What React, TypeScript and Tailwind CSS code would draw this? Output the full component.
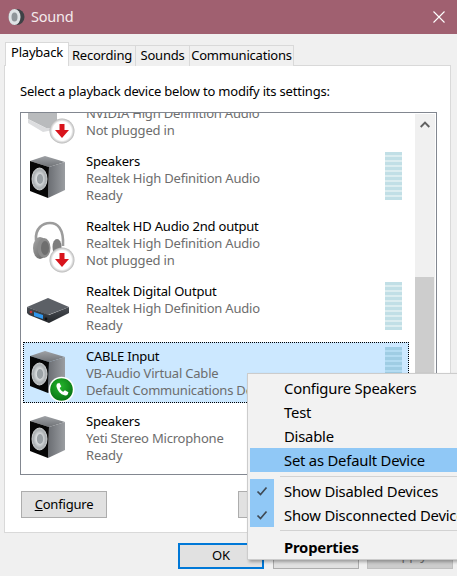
import React from "react";

const Defs = () => (
  <svg width="0" height="0" className="absolute">
    <defs>
      <linearGradient id="side" x1="0" y1="0" x2="1" y2="0">
        <stop offset="0" stopColor="#6a6d72" />
        <stop offset="1" stopColor="#9a9da1" />
      </linearGradient>
      <linearGradient id="top" x1="0" y1="0" x2="0" y2="1">
        <stop offset="0" stopColor="#9fa2a6" />
        <stop offset="1" stopColor="#6f7276" />
      </linearGradient>
      <radialGradient id="cone" cx="0.5" cy="0.5" r="0.6">
        <stop offset="0" stopColor="#8d9498" />
        <stop offset="0.3" stopColor="#e4e7e8" />
        <stop offset="0.7" stopColor="#a9aeb1" />
        <stop offset="1" stopColor="#eceeee" />
      </radialGradient>
      <radialGradient id="green" cx="0.45" cy="0.35" r="0.75">
        <stop offset="0" stopColor="#25b52c" />
        <stop offset="1" stopColor="#046b10" />
      </radialGradient>
      <radialGradient id="ring" cx="0.5" cy="0.5" r="0.5">
        <stop offset="0.75" stopColor="#ffffff" />
        <stop offset="1" stopColor="#b5b5b5" />
      </radialGradient>
      <linearGradient id="box" x1="0" y1="0" x2="0" y2="1">
        <stop offset="0" stopColor="#4a4e54" />
        <stop offset="1" stopColor="#23262a" />
      </linearGradient>
      <linearGradient id="cup" x1="0" y1="0" x2="1" y2="1">
        <stop offset="0" stopColor="#a8a8a8" />
        <stop offset="1" stopColor="#5f5f5f" />
      </linearGradient>
    </defs>
  </svg>
);

const Speaker = () => (
  <g>
    <path d="M7 14 L22 9 L42 15 L26 20 Z" fill="url(#top)" />
    <path d="M26 20 L42 15 L42 43 L25 51 Z" fill="url(#side)" />
    <path d="M7 14 L26 20 L25 51 L7 44 Z" fill="#060606" />
    <ellipse cx="16.5" cy="32" rx="7.5" ry="11" fill="url(#cone)" stroke="#c9cccd" strokeWidth="1" />
    <ellipse cx="17" cy="32" rx="3.2" ry="5" fill="#9aa1a5" />
  </g>
);

const RedBadge = ({ cx, cy }: { cx: number; cy: number }) => (
  <g>
    <circle cx={cx} cy={cy} r="12.5" fill="url(#ring)" />
    <path
      d={`M${cx - 2.5} ${cy - 7} h5 v6 h4.5 L${cx} ${cy + 7} L${cx - 7} ${cy - 1} h4.5 Z`}
      fill="#d8141c"
    />
  </g>
);

const PhoneBadge = () => (
  <g>
    <circle cx="38.5" cy="47.5" r="12.8" fill="#ffffff" />
    <circle cx="38.5" cy="47.5" r="11.3" fill="url(#green)" />
    <path
      d="M34.3 41.5 l2.2 -0.6 l1.8 3.6 l-1.6 1.5 c0.6 1.8 1.9 3.1 3.6 3.8 l1.6 -1.5 l3.5 2 l-0.7 2.2 c-0.8 1 -2 1.2 -3.3 0.8 c-4 -1.2 -6.8 -4.3 -7.8 -8.4 c-0.3 -1.4 0 -2.6 0.7 -3.4 Z"
      fill="#ffffff"
    />
  </g>
);

type IconKind = "monitor" | "speaker" | "headset" | "digital" | "cable";

const DeviceIcon = ({ kind }: { kind: IconKind }) => (
  <svg width="63" height="65" viewBox="0 0 63 65" className="shrink-0 overflow-visible">
    {kind === "monitor" && (
      <g>
        <path d="M5 28 L34 28 L34 46 L23 46 L5 37 Z" fill="#b9bbbd" />
        <path d="M5 37 L23 46 L28 46 L30 48 L20 50 L5 41 Z" fill="#dcdddf" />
        <RedBadge cx={39} cy={49} />
      </g>
    )}
    {kind === "speaker" && <Speaker />}
    {kind === "cable" && (
      <g>
        <Speaker />
        <PhoneBadge />
      </g>
    )}
    {kind === "headset" && (
      <g>
        <path d="M13 28 C12 16 20 11 27 11 C34 11 41 16 40 34" fill="none" stroke="#9c9c9c" strokeWidth="2.6" />
        <ellipse cx="17" cy="36" rx="7" ry="11" fill="url(#cup)" />
        <ellipse cx="21" cy="36" rx="6.5" ry="10" fill="#8c8c8c" />
        <ellipse cx="22" cy="36" rx="4" ry="7" fill="#6e6e6e" />
        <ellipse cx="34" cy="35" rx="4.5" ry="8" fill="#7e7e7e" />
        <RedBadge cx={39} cy={48} />
      </g>
    )}
    {kind === "digital" && (
      <g>
        <path d="M4 30 L25 21 L46 30 L25 38 Z" fill="#5c6066" />
        <path d="M4 30 L4 36 L6 38 L26 46 L46 36 L46 30 L26 38 Z" fill="url(#box)" />
        <path d="M11 35 L20 38 L20 42 L11 39 Z" fill="#2f97ee" />
        <circle cx="8" cy="35" r="1.3" fill="#c8343a" />
        <circle cx="23" cy="42" r="1.4" fill="#0e0f11" />
      </g>
    )}
  </svg>
);

const Meter = ({ selected }: { selected?: boolean }) => (
  <div className="flex flex-col w-[17px] mr-[7px] ml-[2px] shrink-0">
    {[0, 1, 2, 3, 4, 5, 6, 7, 8, 9].map((i) => (
      <div key={i} className="flex flex-col">
        <div className={selected ? "h-[3px] bg-[#9fcde4]" : "h-[3px] bg-[#c1dfe6]"} />
        {i < 9 && <div className={selected ? "h-[2px] bg-[#b4dcf2]" : "h-[2px] bg-[#dcedf0]"} />}
      </div>
    ))}
  </div>
);

const Row = ({
  icon,
  name,
  sub,
  status,
  meter,
  selected,
}: {
  icon: IconKind;
  name: string;
  sub: string;
  status: string;
  meter?: boolean;
  selected?: boolean;
}) => (
  <div className="h-[65px] w-[386px]">
    <div
      className={
        selected
          ? "h-[61px] flex bg-[#cce8ff] outline-1 outline-dotted outline-black -outline-offset-1"
          : "h-[61px] flex"
      }
    >
      <div className="w-[63px] h-[61px] shrink-0">
        <DeviceIcon kind={icon} />
      </div>
      <div className="flex-1 min-w-0 pt-[6px] whitespace-nowrap overflow-hidden text-[13px] leading-[17px]">
        <div className="text-black">{name}</div>
        <div className="text-[#6d6d6d]">{sub}</div>
        <div className="text-[#6d6d6d]">{status}</div>
      </div>
      <div className="pt-[5px] shrink-0 flex">{meter && <Meter selected={selected} />}</div>
    </div>
  </div>
);

const Tab = ({ label, w }: { label: string; w: string }) => (
  <div className={`${w} h-[21px] bg-[#f0f0f0] border border-b-0 border-[#d9d9d9] -ml-px flex items-center justify-center text-[13px] text-black`}>
    {label}
  </div>
);

const Btn = ({
  children,
  cls = "bg-[#e1e1e1] border border-[#adadad]",
}: {
  children: React.ReactNode;
  cls?: string;
}) => (
  <div className={`w-[86px] h-[26px] flex items-center justify-center text-[13px] shrink-0 ${cls}`}>{children}</div>
);

const Check = () => (
  <svg width="24" height="24" viewBox="0 0 24 24">
    <path d="M7.5 12.5 L10.5 15.5 L16.5 8.5" fill="none" stroke="#3f4a55" strokeWidth="1.7" />
  </svg>
);

const MenuItem = ({
  label,
  active,
  checked,
  bold,
}: {
  label: string;
  active?: boolean;
  checked?: boolean;
  bold?: boolean;
}) => (
  <div className={active ? "h-6 flex items-center bg-[#90c8f6]" : "h-6 flex items-center"}>
    <div className={checked ? "w-6 h-6 bg-[#90c8f6] shrink-0" : "w-6 h-6 shrink-0"}>{checked && <Check />}</div>
    <div className={bold ? "pl-[10px] font-bold whitespace-nowrap" : "pl-[10px] whitespace-nowrap"}>{label}</div>
  </div>
);

export default function App() {
  return (
    <div
      className="relative w-[457px] h-[576px] overflow-hidden bg-[#f0f0f0] text-black tracking-[-0.2px]"
      style={{ fontFamily: '"Noto Sans", "Open Sans", sans-serif' }}
    >
      <Defs />
      {/* Title bar */}
      <div className="h-[34px] bg-[#a06070] flex items-center pl-[8px] pr-[12px]">
        <svg width="17" height="18" viewBox="0 0 17 18" className="shrink-0">
          <circle cx="8.5" cy="9" r="8" fill="#3e4145" />
          <ellipse cx="6.5" cy="9" rx="6" ry="8" fill="#dfe3e5" />
          <ellipse cx="6.5" cy="9" rx="3" ry="4.5" fill="#8f9599" />
        </svg>
        <div className="ml-[6px] text-[14.5px] text-[#f4eaec]">Sound</div>
        <svg width="12" height="12" viewBox="0 0 12 12" className="ml-auto">
          <path d="M0.5 0.5 L11.5 11.5 M11.5 0.5 L0.5 11.5" stroke="#ffffff" strokeWidth="1.1" />
        </svg>
      </div>

      {/* Tabs */}
      <div className="relative z-10 h-[24px] mt-[8px] pl-[5px] flex items-end">
        <div className="w-[64px] h-[24px] bg-white border border-b-0 border-[#d9d9d9] flex items-center justify-center text-[13px] pb-[3px]">
          Playback
        </div>
        <Tab label="Recording" w="w-[68px]" />
        <Tab label="Sounds" w="w-[55px]" />
        <Tab label="Communications" w="w-[105px]" />
      </div>

      {/* Panel */}
      <div className="ml-[4px] -mt-px w-[447px] h-[468px] bg-white border border-[#d9d9d9] pl-[15px] flex flex-col">
        <div className="h-[46px] pt-[16px] text-[13px] leading-[18px]">
          Select a playback device below to modify its settings:
        </div>
        <div className="w-[417px] h-[363px] border border-[#828790] flex overflow-hidden shrink-0">
          <div className="w-[394px] h-full overflow-hidden pl-[2px] pt-px">
            <div className="-mt-[32px]">
              <Row icon="monitor" name="Speakers" sub="NVIDIA High Definition Audio" status="Not plugged in" />
              <Row icon="speaker" name="Speakers" sub="Realtek High Definition Audio" status="Ready" meter />
              <Row icon="headset" name="Realtek HD Audio 2nd output" sub="Realtek High Definition Audio" status="Not plugged in" />
              <Row icon="digital" name="Realtek Digital Output" sub="Realtek High Definition Audio" status="Ready" meter />
              <Row icon="cable" name="CABLE Input" sub="VB-Audio Virtual Cable" status="Default Communications Device" meter selected />
              <Row icon="speaker" name="Speakers" sub="Yeti Stereo Microphone" status="Ready" meter />
            </div>
          </div>
          <div className="w-[20px] mt-px mb-px flex flex-col bg-[#f0f0f0] shrink-0">
            <div className="h-[163px] shrink-0 flex justify-center pt-[7px]">
              <svg width="10" height="7" viewBox="0 0 10 7">
                <path d="M0.7 6 L5 1.6 L9.3 6" fill="none" stroke="#606060" strokeWidth="1.9" />
              </svg>
            </div>
            <div className="flex-1 w-[19px] bg-[#cdcdcd]" />
          </div>
        </div>
        <div className="mt-[16px] ml-px flex gap-[131px]">
          <div className="h-[27px] w-[86px] pt-px bg-[#e1e1e1] border border-[#adadad] flex items-center justify-center text-[13px]">
            <span>
              <u>C</u>onfigure
            </span>
          </div>
          <div className="h-[27px] w-[86px] bg-[#e1e1e1] border border-[#adadad] flex items-center justify-center text-[13px]">
            Set Default
          </div>
        </div>
      </div>

      {/* Dialog buttons */}
      <div className="mt-[10px] pr-[4px] flex justify-end gap-[8px]">
        <Btn cls="mr-px bg-[#e1e1e1] border-2 border-[#0078d7]">OK</Btn>
        <Btn>Cancel</Btn>
        <Btn cls="bg-[#cccccc] border border-[#bfbfbf] text-[#6d6d6d]">Apply</Btn>
      </div>

      {/* Context menu */}
      <div className="absolute left-[247px] top-[373px] w-[240px] h-[187px] bg-[#f2f2f2] border border-[#cccccc] p-[2px] text-[14.8px] shadow-[2px_2px_3px_rgba(0,0,0,0.3)]">
        <MenuItem label="Configure Speakers" />
        <MenuItem label="Test" />
        <MenuItem label="Disable" />
        <MenuItem label="Set as Default Device" active />
        <div className="h-[7px] pt-[4px] pl-[30px]">
          <div className="h-px w-full bg-[#d2d2d2]" />
        </div>
        <MenuItem label="Show Disabled Devices" checked />
        <MenuItem label="Show Disconnected Devices" checked />
        <div className="h-[8px] pt-[3px] pl-[30px]">
          <div className="h-px w-full bg-[#d2d2d2]" />
        </div>
        <MenuItem label="Properties" bold />
      </div>
    </div>
  );
}
